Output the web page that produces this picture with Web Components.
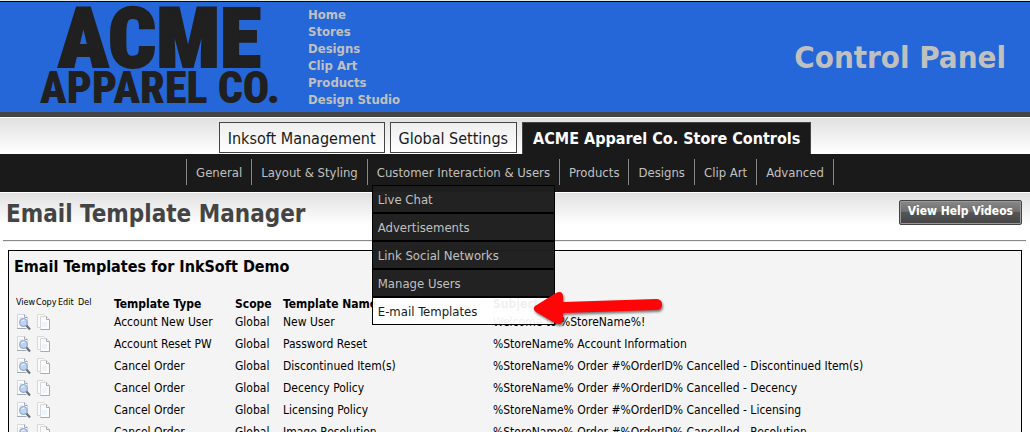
<!DOCTYPE html>
<html lang="en">
<head>
<meta charset="utf-8">
<meta name="viewport" content="width=device-width, initial-scale=1">
<title>Email Template Manager</title>
<style>
  body { margin: 0; height: 100vh; overflow: hidden; background: #fff; color: #000;
    font-family: "DejaVu Sans Condensed", "DejaVu Sans", Tahoma, sans-serif; font-size: 12px; }
</style>
</head>
<body>
<store-header heading="Control Panel">
  <store-logo slot="logo"></store-logo>
  <header-link href="#home">Home</header-link>
  <header-link href="#stores">Stores</header-link>
  <header-link href="#designs">Designs</header-link>
  <header-link href="#clipart">Clip Art</header-link>
  <header-link href="#products">Products</header-link>
  <header-link href="#studio">Design Studio</header-link>
</store-header>
<tab-bar>
  <tab-item href="#inksoft">Inksoft Management</tab-item>
  <tab-item href="#global">Global Settings</tab-item>
  <tab-item href="#store" active>ACME Apparel Co. Store Controls</tab-item>
</tab-bar>
<nav-bar>
  <nav-item href="#general">General</nav-item>
  <nav-item href="#layout">Layout &amp; Styling</nav-item>
  <nav-item href="#customers">Customer Interaction &amp; Users
    <drop-menu slot="menu">
      <menu-entry href="#chat">Live Chat</menu-entry>
      <menu-entry href="#ads">Advertisements</menu-entry>
      <menu-entry href="#social">Link Social Networks</menu-entry>
      <menu-entry href="#users">Manage Users</menu-entry>
      <menu-entry href="#email" active>E-mail Templates<pointer-arrow slot="marker"></pointer-arrow></menu-entry>
    </drop-menu>
  </nav-item>
  <nav-item href="#products">Products</nav-item>
  <nav-item href="#designs">Designs</nav-item>
  <nav-item href="#clipart">Clip Art</nav-item>
  <nav-item href="#advanced">Advanced</nav-item>
</nav-bar>
<page-title>Email Template Manager<push-button slot="action">View Help Videos</push-button></page-title>
<content-panel>
  <span slot="heading">Email Templates for InkSoft Demo</span>
  <template-table></template-table>
</content-panel>

<script>
const define = (name, html, setup) => {
  const template = document.createElement('template');
  template.innerHTML = html;
  customElements.define(name, class extends HTMLElement {
    constructor() {
      super();
      this.attachShadow({ mode: 'open' }).append(template.content.cloneNode(true));
    }
    connectedCallback() {
      const link = this.shadowRoot.querySelector('a');
      if (link && this.hasAttribute('href')) link.href = this.getAttribute('href');
      if (setup) setup(this, this.shadowRoot);
    }
  });
};

define('store-header', `
  <style>
    :host { display: block; border-top: 1px solid #dfeee0; }
    header { display: flex; align-items: center; gap: 29px; height: 110px; padding: 0 24px 0 40px;
      background: #2566d8; border-top: 1px solid #000; border-bottom: 5px solid #444; color: #c0c0c0; }
    nav { display: flex; flex-direction: column; flex: 1; }
    h1 { margin: 0; font-size: 31px; line-height: 40px; }
  </style>
  <header><slot name="logo"></slot><nav><slot></slot></nav><h1></h1></header>`,
  (el, root) => { root.querySelector('h1').textContent = el.getAttribute('heading'); });

define('header-link', `
  <style>
    :host { display: block; line-height: 17px; font-size: 13px; font-weight: 700; }
    a { color: inherit; text-decoration: none; }
  </style>
  <a><slot></slot></a>`);

define('store-logo', `
  <style>
    :host { display: block; width: 239px; }
    a { display: block; text-align: center; text-decoration: none; color: #202020; white-space: nowrap;
      font-family: "Roboto Condensed", Roboto, sans-serif; font-weight: 900; }
    span { display: block; }
    .top { font-size: 84px; line-height: 62px; -webkit-text-stroke: 2px #202020; }
    .bottom { font-size: 44px; line-height: 36px; }
  </style>
  <a href="#home"><span class="top">ACME</span><span class="bottom">APPAREL CO.</span></a>`);

define('tab-bar', `
  <style>
    :host { display: flex; justify-content: center; gap: 5px; height: 32px; padding-top: 4px;
      border-top: 1px solid #fff; background: linear-gradient(#e1e1e1, #fff); }
  </style>
  <slot></slot>`);

define('tab-item', `
  <style>
    :host { display: block; font-size: 16px; line-height: 28px; }
    a { display: block; box-sizing: border-box; height: 31px; padding: 2px 8px 0; border: 1px solid #444; color: #1a1a1a;
      background: linear-gradient(#eee, #fff); text-decoration: none; white-space: nowrap; }
    :host([active]) a { height: 32px; padding: 2px 10px 0; border-bottom: 0; background: #1a1a1a; color: #fff; font-weight: 700; }
  </style>
  <a><slot></slot></a>`);

define('nav-bar', `
  <style>
    :host { display: block; background: #1a1a1a; }
    nav { display: flex; justify-content: center; padding: 5px 10px 7px 0; }
    nav::after { content: ""; border-left: 1px solid #888; }
  </style>
  <nav><slot></slot></nav>`);

define('nav-item', `
  <style>
    :host { display: block; position: relative; border-left: 1px solid #888; font-size: 13px; line-height: 24px; }
    a { display: block; padding: 2px 9px 0; color: #c0c0c0; text-decoration: none; white-space: nowrap; }
    ::slotted([slot="menu"]) { position: absolute; top: 100%; left: 4px; z-index: 1; }
  </style>
  <a><slot></slot></a><slot name="menu"></slot>`);

define('drop-menu', `
  <style>:host { display: block; width: 183px; }</style>
  <slot></slot>`);

define('menu-entry', `
  <style>
    :host { display: block; position: relative; font-size: 13px; line-height: 24px; }
    a { display: block; padding: 2px 5px 0; border: 1px solid #000; background: rgba(30, 30, 30, .98);
      color: #c0c0c0; text-decoration: none; }
    :host([active]) a { background: rgba(255, 255, 255, .94); color: #1a1a1a; }
    ::slotted([slot="marker"]) { position: absolute; top: -8px; left: 160px; }
  </style>
  <a><slot></slot></a><slot name="marker"></slot>`);

define('pointer-arrow', `
  <style>
    :host { display: block; }
    svg { display: block; filter: drop-shadow(1px 2px 1px rgba(0, 0, 0, .5)); }
  </style>
  <svg width="134" height="42" viewBox="0 0 134 42" aria-hidden="true">
    <path fill="#fe0508" d="M3 17 24 4Q31 1 31 8V13L124 10Q130 10 130 15.500Q130 21 124 21L31 24V31Q30 37 23 34L4 23Q0 20 3 17Z"/>
  </svg>`);

define('page-title', `
  <style>
    :host { display: block; padding: 0 4px 0 3px; border-top: 1px solid #fff;
      background: linear-gradient(#e1e1e1, #fff 32px); }
    div { display: flex; justify-content: space-between; align-items: flex-start; height: 47px;
      padding: 0 4px 0 3px; box-sizing: border-box; }
    h1 { margin: 0; font-size: 24px; line-height: 42px; color: #444; }
    ::slotted([slot="action"]) { margin-top: 7px; }
    hr { margin: 0; border: 0; border-top: 1px solid #888; border-bottom: 1px solid #eee; }
  </style>
  <div><h1><slot></slot></h1><slot name="action"></slot></div><hr>`);

define('push-button', `
  <style>
    :host { display: block; }
    button { display: block; height: 25px; padding: 0 8px 3px; border: 1px solid #444; border-radius: 2px;
      background: linear-gradient(#888, #707070 45%, #555 50%, #444); box-shadow: inset 0 0 0 1px #999;
      color: #fff; font: 700 12px/18px "DejaVu Sans Condensed", sans-serif; }
  </style>
  <button type="button"><slot></slot></button>`);

define('content-panel', `
  <style>
    :host { display: block; margin: 8px 8px 0; padding: 5px 7px; border: 1px solid #000; background: #f4f4f4; }
    h2 { margin: 0 0 18px -2px; font-size: 16px; line-height: 22px; }
  </style>
  <h2><slot name="heading"></slot></h2><slot></slot>`);

define('view-icon', `
  <style>:host, svg { display: block; }</style>
  <svg width="16" height="17" viewBox="0 0 16 17" aria-hidden="true">
    <path d="M1.500.5h7l3 3v11h-10z" fill="#fbfcfe" stroke="#d4d8de"/>
    <path d="M8.500.5v3h3M1 14.500h9" fill="none" stroke="#a4a9b0"/>
    <path d="M3.500 4h3M3.500 6h2" stroke="#c9d6ea"/>
    <circle cx="7.500" cy="8.500" r="3.800" fill="#bdd3f3" stroke="#94abd0" stroke-width="1.300"/>
    <path d="M5.500 7.500q1-2 3-1.500" fill="none" stroke="#fff"/>
    <path d="m10.500 11.500 3.500 4" stroke="#666b78" stroke-width="2"/>
  </svg>`);

define('copy-icon', `
  <style>:host, svg { display: block; }</style>
  <svg width="16" height="17" viewBox="0 0 16 17" aria-hidden="true">
    <path d="M1.500.5h6l2 2v11h-8z" fill="#fbfbfb" stroke="#d8d8d8"/>
    <path d="M4.500 2.500h6l3 3v10h-9z" fill="#fafcfd" stroke="#d8d8d8"/>
    <path d="M10.500 2.500v3h3M13.500 6v9.500h-9" fill="none" stroke="#aaa"/>
    <path d="M6 8h5v5H6z" fill="#edf3f7"/>
  </svg>`);

define('template-table', `
  <style>
    :host { display: block; }
    table { width: 100%; table-layout: fixed; border-collapse: collapse; }
    th, td { padding: 0; text-align: left; white-space: nowrap; line-height: 22px; height: 22px; }
    th { height: 13px; line-height: 13px; padding-top: 2px; }
    th.small { font-size: 9px; font-weight: 400; line-height: 12px; padding: 0; vertical-align: top; }
    button { display: block; margin: 0; padding: 0; border: 0; background: none; }
    .c20 { width: 20px; } .c22 { width: 22px; } .c36 { width: 36px; }
    .type { width: 121px; } .scope { width: 48px; } .name { width: 210px; }
  </style>
  <table>
    <colgroup><col class="c20"><col class="c22"><col class="c20"><col class="c36"><col class="type"><col class="scope"><col class="name"><col></colgroup>
    <thead><tr>
      <th class="small">View</th><th class="small">Copy</th><th class="small">Edit</th><th class="small">Del</th>
      <th>Template Type</th><th>Scope</th><th>Template Name</th><th>Subject</th>
    </tr></thead>
    <tbody></tbody>
  </table>`,
  (el, root) => {
    const rows = [
      ['Account New User', 'New User', 'Welcome to %StoreName%!'],
      ['Account Reset PW', 'Password Reset', '%StoreName% Account Information'],
      ['Cancel Order', 'Discontinued Item(s)', '%StoreName% Order #%OrderID% Cancelled - Discontinued Item(s)'],
      ['Cancel Order', 'Decency Policy', '%StoreName% Order #%OrderID% Cancelled - Decency'],
      ['Cancel Order', 'Licensing Policy', '%StoreName% Order #%OrderID% Cancelled - Licensing'],
      ['Cancel Order', 'Image Resolution', '%StoreName% Order #%OrderID% Cancelled - Resolution']
    ];
    root.querySelector('tbody').innerHTML = rows.map(([type, name, subject]) => `<tr>
      <td><button type="button" aria-label="View"><view-icon></view-icon></button></td>
      <td><button type="button" aria-label="Copy"><copy-icon></copy-icon></button></td>
      <td></td><td></td>
      <td>${type}</td><td>Global</td><td>${name}</td><td>${subject}</td></tr>`).join('');
  });
</script>
</body>
</html>
